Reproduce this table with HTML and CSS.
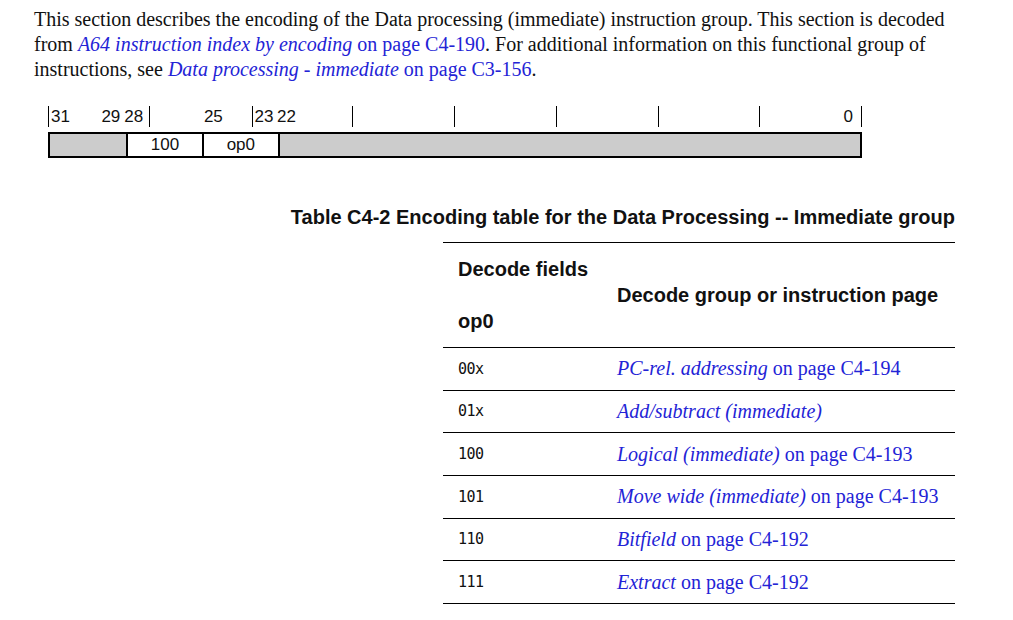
FILE: index.html
```html
<!DOCTYPE html>
<html>
<head>
<meta charset="utf-8">
<link rel="stylesheet" href="styles.css">
</head>
<body>
<div class="page">
  <p class="intro">This section describes the encoding of the Data processing (immediate) instruction group. This section is decoded from <a class="xref"><i>A64 instruction index by encoding</i> on page C4-190</a>. For additional information on this functional group of instructions, see <a class="xref"><i>Data processing - immediate</i> on page C3-156</a>.</p>

  <div class="encoding">
    <div class="bits">
      <span class="bit tick-l">31</span>
      <span class="bit"></span>
      <span class="bit right">29</span>
      <span class="bit tick-r">28</span>
      <span class="bit"></span>
      <span class="bit"></span>
      <span class="bit center">25</span>
      <span class="bit"></span>
      <span class="bit tick-l">23</span>
      <span class="bit">22</span>
      <span class="bit"></span>
      <span class="bit tick-r"></span>
      <span class="bit"></span><span class="bit"></span><span class="bit"></span><span class="bit tick-r"></span>
      <span class="bit"></span><span class="bit"></span><span class="bit"></span><span class="bit tick-r"></span>
      <span class="bit"></span><span class="bit"></span><span class="bit"></span><span class="bit tick-r"></span>
      <span class="bit"></span><span class="bit"></span><span class="bit"></span><span class="bit tick-r"></span>
      <span class="bit"></span><span class="bit"></span><span class="bit"></span><span class="bit tick-r right zero">0</span>
    </div>
    <div class="fields">
      <div class="field grey f-31-29"></div>
      <div class="field f-28-26">100</div>
      <div class="field f-25-23">op0</div>
      <div class="field grey f-22-0"></div>
    </div>
  </div>

  <div class="table-block">
    <div class="caption">Table C4-2 Encoding table for the Data Processing -- Immediate group</div>
    <table class="enc-table">
      <thead>
        <tr>
          <th class="c1"><div class="h-line">Decode fields</div><div class="h-line">op0</div></th>
          <th class="c2">Decode group or instruction page</th>
        </tr>
      </thead>
      <tbody>
        <tr><td class="c1 code">00x</td><td class="c2"><a class="xref"><i>PC-rel. addressing</i> on page C4-194</a></td></tr>
        <tr><td class="c1 code">01x</td><td class="c2"><a class="xref"><i>Add/subtract (immediate)</i></a></td></tr>
        <tr><td class="c1 code">100</td><td class="c2"><a class="xref"><i>Logical (immediate)</i> on page C4-193</a></td></tr>
        <tr><td class="c1 code">101</td><td class="c2"><a class="xref"><i>Move wide (immediate)</i> on page C4-193</a></td></tr>
        <tr><td class="c1 code">110</td><td class="c2"><a class="xref"><i>Bitfield</i> on page C4-192</a></td></tr>
        <tr><td class="c1 code">111</td><td class="c2"><a class="xref"><i>Extract</i> on page C4-192</a></td></tr>
      </tbody>
    </table>
  </div>
</div>
</body>
</html>
```

FILE: styles.css
```css
html, body {
  margin: 0;
  padding: 0;
  background: #fff;
}

.page {
  padding: 7px 58px 0 34px;
  color: #111;
}

.intro {
  margin: 0;
  max-width: 925px;
  font-family: "Liberation Serif", "Times New Roman", serif;
  font-size: 20px;
  line-height: 25px;
  color: #111;
}

.xref {
  color: #2323d6;
  text-decoration: none;
}

.encoding {
  margin: 24px 0 0 14px;
  width: 814px;
  font-family: "Liberation Sans", Arial, sans-serif;
  font-size: 17px;
  color: #111;
}

.bits {
  display: grid;
  grid-template-columns: repeat(32, 1fr);
  height: 20px;
  align-items: stretch;
}

.bit {
  white-space: nowrap;
  line-height: 20px;
  padding-top: 1px;
}

.bit.right { text-align: right; direction: rtl; padding-right: 4px; }
.bit.center { text-align: center; }

.tick-l { border-left: 1px solid #000; padding-left: 2px; }
.tick-r { border-right: 1px solid #000; padding-right: 2px; }
.bit.zero { padding-right: 8px; }

.fields {
  margin-top: 6px;
  display: grid;
  grid-template-columns: repeat(32, 1fr);
  height: 26px;
  border: 2px solid #000;
  box-sizing: border-box;
  font-size: 17px;
}

.field {
  text-align: center;
  line-height: 22px;
  border-left: 2px solid #000;
}

.field:first-child { border-left: none; }
.grey { background: #cccccc; }

.f-31-29 { grid-column: 1 / span 3; }
.f-28-26 { grid-column: 4 / span 3; }
.f-25-23 { grid-column: 7 / span 3; }
.f-22-0 { grid-column: 10 / span 23; }

.table-block {
  margin-top: 47px;
  display: flex;
  flex-direction: column;
  align-items: flex-end;
}

.caption {
  font-family: "Liberation Sans", Arial, sans-serif;
  font-weight: bold;
  font-size: 20px;
  line-height: 24px;
  color: #111;
}

.enc-table {
  margin-top: 13px;
  width: 512px;
  border-collapse: collapse;
}

.enc-table th,
.enc-table td {
  padding: 0;
  text-align: left;
  vertical-align: middle;
  border-bottom: 1px solid #000;
}

.enc-table thead tr { border-top: 1px solid #000; }

.enc-table th {
  font-family: "Liberation Sans", Arial, sans-serif;
  font-weight: bold;
  font-size: 20px;
  height: 101px;
  color: #111;
}

.h-line { line-height: 52px; }

.enc-table .c1 { width: 174px; padding-left: 15px; box-sizing: border-box; }

.enc-table td {
  height: 41.67px;
  font-family: "Liberation Serif", "Times New Roman", serif;
  font-size: 20px;
}

.enc-table td.code {
  font-family: "DejaVu Sans Mono", monospace;
  font-size: 15px;
  letter-spacing: -0.5px;
  color: #111;
}
```
